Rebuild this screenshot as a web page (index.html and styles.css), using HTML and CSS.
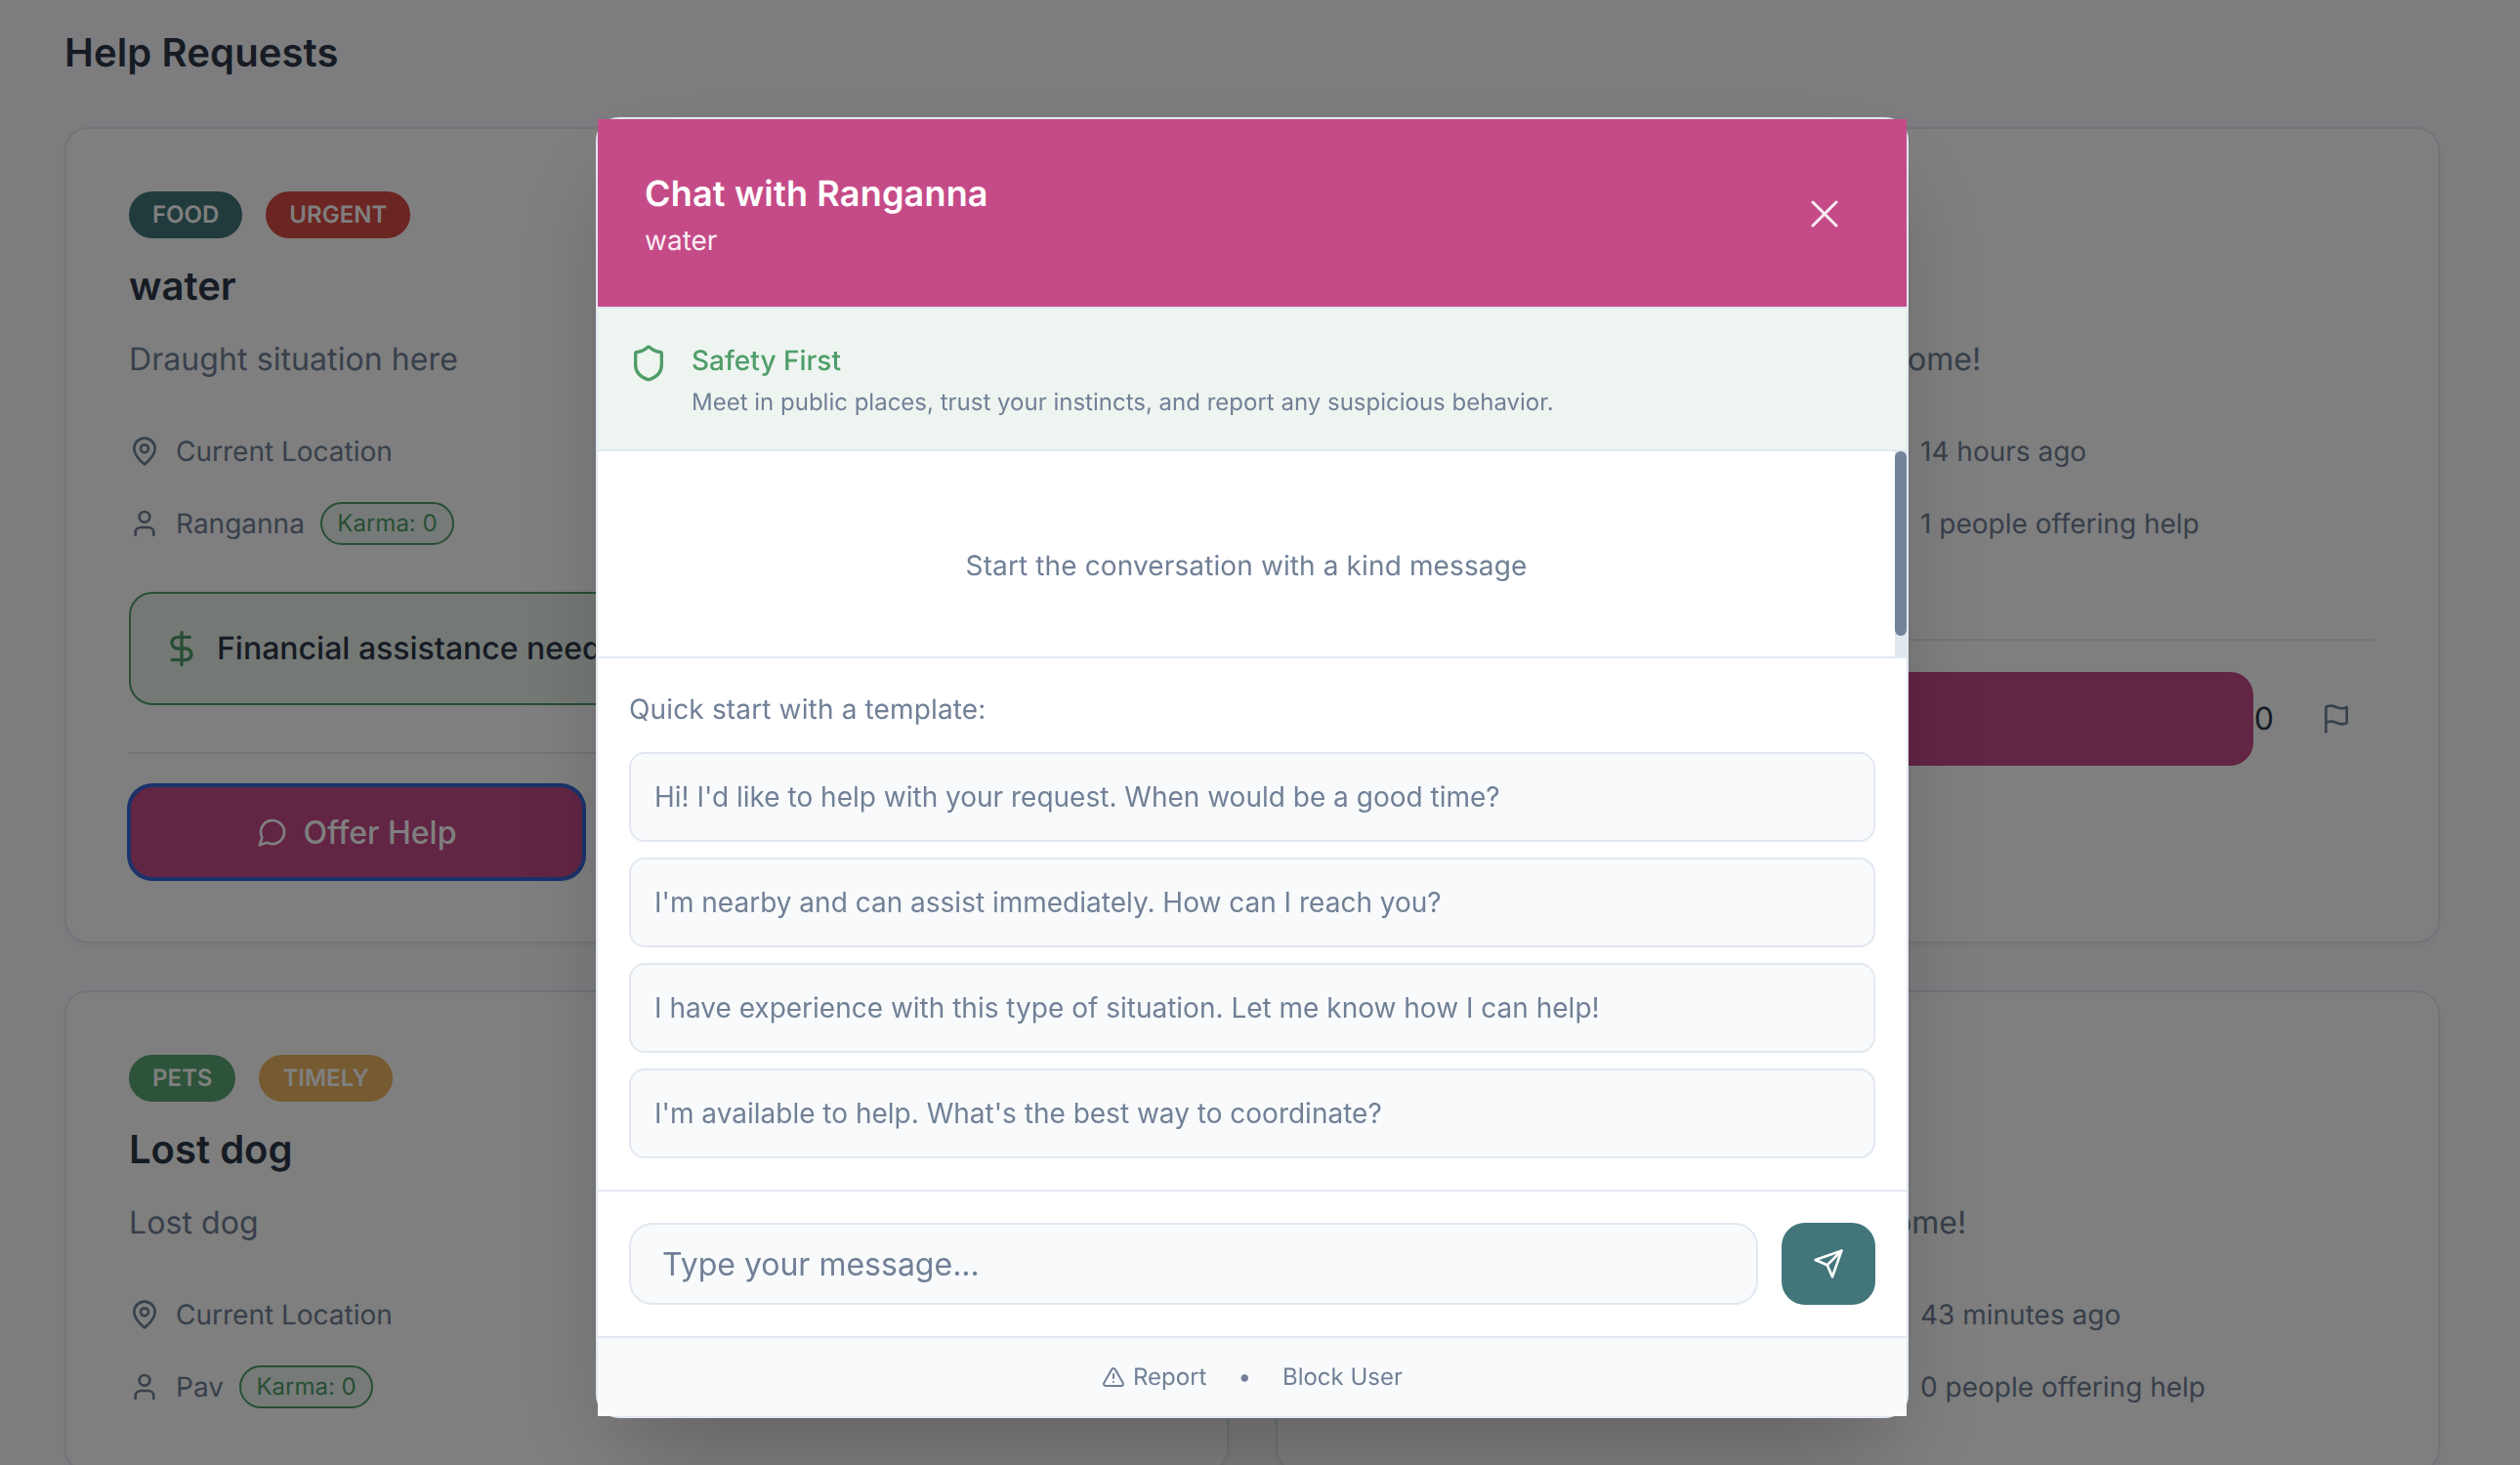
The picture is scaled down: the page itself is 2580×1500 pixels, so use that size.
FILE: index.html
```html
<!DOCTYPE html>
<html lang="en">
<head>
<meta charset="utf-8">
<title>Help Requests</title>
<link rel="stylesheet" href="styles.css">
</head>
<body>
<main class="page">
  <h1 class="page-title">Help Requests</h1>
  <div class="card-grid">
    <article class="card">
      <div class="badges"><span class="badge badge-teal">FOOD</span><span class="badge badge-red">URGENT</span></div>
      <h2 class="card-title">water</h2>
      <p class="card-desc">Draught situation here</p>
      <div class="meta">
        <div class="meta-item"><svg class="icon" viewBox="0 0 24 24"><path d="M20 10c0 6-8 12-8 12s-8-6-8-12a8 8 0 0 1 16 0Z"/><circle cx="12" cy="10" r="3"/></svg><span>Current Location</span></div>
        <div class="meta-item"><svg class="icon" viewBox="0 0 24 24"><circle cx="12" cy="12" r="10"/><path d="M12 6v6l4 2"/></svg><span>2 hours ago</span></div>
        <div class="meta-item"><svg class="icon" viewBox="0 0 24 24"><path d="M19 21v-2a4 4 0 0 0-4-4H9a4 4 0 0 0-4 4v2"/><circle cx="12" cy="7" r="4"/></svg><span>Ranganna</span><span class="karma">Karma: 0</span></div>
        <div class="meta-item"><svg class="icon" viewBox="0 0 24 24"><path d="M19 21v-2a4 4 0 0 0-4-4H9a4 4 0 0 0-4 4v2"/><circle cx="12" cy="7" r="4"/></svg><span>0 people offering help</span></div>
      </div>
      <div class="finance"><svg class="icon-lg icon-green" viewBox="0 0 24 24"><path d="M12 2v20"/><path d="M17 5H9.5a3.5 3.5 0 0 0 0 7h5a3.5 3.5 0 0 1 0 7H6"/></svg><span>Financial assistance needed</span></div>
      <div class="actions">
        <button class="btn-offer btn-focus btn-half"><svg class="icon icon-dim" viewBox="0 0 24 24"><path d="M7.9 20A9 9 0 1 0 4 16.1L2 22Z"/></svg>Offer Help</button>
      </div>
    </article>
    <article class="card">
      <div class="badges"><span class="badge badge-teal">OTHER</span><span class="badge badge-red">URGENT</span></div>
      <h2 class="card-title">Need a hand</h2>
      <p class="card-desc">Looking for support today, all are welcome!</p>
      <div class="meta">
        <div class="meta-item"><svg class="icon" viewBox="0 0 24 24"><path d="M20 10c0 6-8 12-8 12s-8-6-8-12a8 8 0 0 1 16 0Z"/><circle cx="12" cy="10" r="3"/></svg><span>Current Location</span></div>
        <div class="meta-item"><svg class="icon" viewBox="0 0 24 24"><circle cx="12" cy="12" r="10"/><path d="M12 6v6l4 2"/></svg><span>14 hours ago</span></div>
        <div class="meta-item"><svg class="icon" viewBox="0 0 24 24"><path d="M19 21v-2a4 4 0 0 0-4-4H9a4 4 0 0 0-4 4v2"/><circle cx="12" cy="7" r="4"/></svg><span>Ranganna</span><span class="karma">Karma: 0</span></div>
        <div class="meta-item"><svg class="icon" viewBox="0 0 24 24"><path d="M19 21v-2a4 4 0 0 0-4-4H9a4 4 0 0 0-4 4v2"/><circle cx="12" cy="7" r="4"/></svg><span>1 people offering help</span></div>
      </div>
      <div class="actions actions-lower">
        <button class="btn-offer btn-grow"><svg class="icon icon-dim" viewBox="0 0 24 24"><path d="M7.9 20A9 9 0 1 0 4 16.1L2 22Z"/></svg>Offer Help</button>
        <span class="count">0</span>
        <button class="btn-flag"><svg class="icon" viewBox="0 0 24 24"><path d="M4 15s1-1 4-1 5 2 8 2 4-1 4-1V3s-1 1-4 1-5-2-8-2-4 1-4 1z"/><path d="M4 22v-7"/></svg></button>
      </div>
    </article>
    <article class="card">
      <div class="badges"><span class="badge badge-green">PETS</span><span class="badge badge-amber">TIMELY</span></div>
      <h2 class="card-title">Lost dog</h2>
      <p class="card-desc">Lost dog</p>
      <div class="meta">
        <div class="meta-item"><svg class="icon" viewBox="0 0 24 24"><path d="M20 10c0 6-8 12-8 12s-8-6-8-12a8 8 0 0 1 16 0Z"/><circle cx="12" cy="10" r="3"/></svg><span>Current Location</span></div>
        <div class="meta-item"><svg class="icon" viewBox="0 0 24 24"><circle cx="12" cy="12" r="10"/><path d="M12 6v6l4 2"/></svg><span>1 hour ago</span></div>
        <div class="meta-item"><svg class="icon" viewBox="0 0 24 24"><path d="M19 21v-2a4 4 0 0 0-4-4H9a4 4 0 0 0-4 4v2"/><circle cx="12" cy="7" r="4"/></svg><span>Pav</span><span class="karma">Karma: 0</span></div>
        <div class="meta-item"><svg class="icon" viewBox="0 0 24 24"><path d="M19 21v-2a4 4 0 0 0-4-4H9a4 4 0 0 0-4 4v2"/><circle cx="12" cy="7" r="4"/></svg><span>0 people offering help</span></div>
      </div>
    </article>
    <article class="card">
      <div class="badges"><span class="badge badge-green">OTHER</span><span class="badge badge-amber">TIMELY</span></div>
      <h2 class="card-title">Need support</h2>
      <p class="card-desc">Looking for support close by, all welcome!</p>
      <div class="meta">
        <div class="meta-item"><svg class="icon" viewBox="0 0 24 24"><path d="M20 10c0 6-8 12-8 12s-8-6-8-12a8 8 0 0 1 16 0Z"/><circle cx="12" cy="10" r="3"/></svg><span>Current Location</span></div>
        <div class="meta-item"><svg class="icon" viewBox="0 0 24 24"><circle cx="12" cy="12" r="10"/><path d="M12 6v6l4 2"/></svg><span>43 minutes ago</span></div>
        <div class="meta-item"><svg class="icon" viewBox="0 0 24 24"><path d="M19 21v-2a4 4 0 0 0-4-4H9a4 4 0 0 0-4 4v2"/><circle cx="12" cy="7" r="4"/></svg><span>Pav</span><span class="karma">Karma: 0</span></div>
        <div class="meta-item"><svg class="icon" viewBox="0 0 24 24"><path d="M19 21v-2a4 4 0 0 0-4-4H9a4 4 0 0 0-4 4v2"/><circle cx="12" cy="7" r="4"/></svg><span>0 people offering help</span></div>
      </div>
    </article>
  </div>
</main>

<div class="overlay"></div>

<section class="modal">
  <header class="modal-head">
    <div>
      <h2 class="modal-title">Chat with Ranganna</h2>
      <p class="modal-sub">water</p>
    </div>
    <button class="modal-close"><svg class="icon-xl" viewBox="0 0 24 24"><path d="M18 6 6 18"/><path d="m6 6 12 12"/></svg></button>
  </header>
  <div class="safety">
    <svg class="icon-lg icon-green safety-icon" viewBox="0 0 24 24"><path d="M20 13c0 5-3.5 7.5-7.66 8.95a1 1 0 0 1-.67-.01C7.5 20.5 4 18 4 13V6a1 1 0 0 1 1-1c2 0 4.5-1.2 6.24-2.72a1.17 1.17 0 0 1 1.52 0C14.51 3.81 17 5 19 5a1 1 0 0 1 1 1z"/></svg>
    <div>
      <div class="safety-title">Safety First</div>
      <div class="safety-text">Meet in public places, trust your instincts, and report any suspicious behavior.</div>
    </div>
  </div>
  <div class="messages">
    <div class="messages-body"><p class="messages-empty">Start the conversation with a kind message</p></div>
    <div class="scroll-track"><div class="scroll-thumb"></div></div>
  </div>
  <div class="templates">
    <div class="templates-label">Quick start with a template:</div>
    <div class="template-list">
      <button class="template">Hi! I'd like to help with your request. When would be a good time?</button>
      <button class="template">I'm nearby and can assist immediately. How can I reach you?</button>
      <button class="template">I have experience with this type of situation. Let me know how I can help!</button>
      <button class="template">I'm available to help. What's the best way to coordinate?</button>
    </div>
  </div>
  <div class="composer">
    <input class="composer-input" type="text" placeholder="Type your message...">
    <button class="composer-send"><svg class="icon icon-white" viewBox="0 0 24 24"><path d="m22 2-7 20-4-9-9-4Z"/><path d="M22 2 11 13"/></svg></button>
  </div>
  <footer class="modal-foot">
    <span class="foot-link"><svg class="icon-sm" viewBox="0 0 24 24"><path d="m21.73 18-8-14a2 2 0 0 0-3.48 0l-8 14A2 2 0 0 0 4 21h16a2 2 0 0 0 1.73-3Z"/><path d="M12 9v4"/><path d="M12 17h.01"/></svg>Report</span>
    <span class="foot-dot">•</span>
    <span class="foot-link">Block User</span>
  </footer>
</section>
</body>
</html>
```
FILE: styles.css
```css
* { box-sizing: border-box; }
html, body { margin: 0; height: 1500px; overflow: hidden; }
body { background: #fafbfe; font-family: Inter, "Liberation Sans", sans-serif; color: #2d3748; text-rendering: geometricPrecision; }
h1, h2, p { margin: 0; }
button { font-family: inherit; border: 0; padding: 0; background: none; }
svg { fill: none; stroke: currentColor; stroke-width: 2; stroke-linecap: round; stroke-linejoin: round; flex: none; }

.icon { width: 32px; height: 32px; }
.icon-lg { width: 40px; height: 40px; }
.icon-xl { width: 48px; height: 48px; display: block; stroke-width: 1.5; }
.icon-sm { width: 24px; height: 24px; }
.icon-green { color: #4f9d69; }
.icon-dim, .icon-white { color: #fff; }

.page { padding: 24px 82px 0 66px; }
.page-title { font-size: 40px; line-height: 60px; font-weight: 600; letter-spacing: .12px; margin-bottom: 46px; }
.card-grid { display: grid; grid-template-columns: 1fr 1fr; gap: 48px; }

.card { background: #fff; border: 2px solid #e2e8f0; border-radius: 24px; padding: 64px; box-shadow: 0 2px 6px rgba(0,0,0,.05); min-width: 0; }
.badges { display: flex; gap: 24px; }
.badge { height: 48px; padding: 0 24px; border-radius: 24px; font-size: 24px; line-height: 48px; font-weight: 600; color: #fff; }
.badge-teal { background: #42767a; }
.badge-red { background: #d64a44; }
.badge-green { background: #5aa674; }
.badge-amber { background: #edb462; }
.card-title { font-size: 40px; line-height: 56px; font-weight: 600; margin-top: 21px; }
.card-desc { font-size: 32px; line-height: 48px; color: #718096; margin-top: 23px; white-space: nowrap; letter-spacing: .08px; }

.meta { display: grid; grid-template-columns: 1fr 1fr; gap: 32px; margin-top: 50px; }
.meta-item { display: flex; align-items: center; gap: 16px; font-size: 28px; line-height: 40px; color: #718096; min-height: 40px; }
.karma { font-size: 24px; line-height: 36px; color: #4f9d69; border: 2px solid #4f9d69; background: rgba(79,157,105,.1); border-radius: 22px; padding: 2px 15.5px; }

.finance { display: flex; align-items: center; gap: 16px; margin-top: 48px; padding: 32px; border: 2px solid #4f9d69; border-radius: 24px; background: rgba(79,157,105,.12); font-size: 32px; line-height: 48px; font-weight: 500; }

.actions { display: flex; align-items: center; margin-top: 48px; padding-top: 32px; border-top: 2px solid #e2e8f0; }
.actions-lower { margin-top: 96px; }
.btn-offer { height: 96px; display: flex; align-items: center; justify-content: center; gap: 16px; border-radius: 24px; background: #c44b88; color: #fff; font-size: 32px; font-weight: 500; }
.btn-half { width: 466px; }
.btn-grow { flex: 1; }
.btn-focus { box-shadow: 0 0 0 2px #2f66d8, inset 0 0 0 2px #2f66d8; }
.count { font-size: 32px; line-height: 48px; padding-left: 1px; }
.btn-flag { margin-left: 24px; padding: 24px; color: #718096; display: flex; }

.overlay { position: fixed; inset: 0; background: rgba(0,0,0,.5); }

.modal { position: fixed; left: 610px; top: 120px; width: 1344px; height: 1332px; background: #fff; border: 2px solid #e2e8f0; border-radius: 24px; box-shadow: 0 50px 100px -24px rgba(0,0,0,.25); display: flex; flex-direction: column; }
.modal-head { height: 192px; flex: none; padding: 49px 48px 47px; background: #c54b88; color: #fff; display: flex; justify-content: space-between; align-items: center; }
.modal-title { font-size: 36px; line-height: 54px; font-weight: 600; letter-spacing: .18px; }
.modal-sub { font-size: 28px; line-height: 42px; opacity: .9; }
.modal-close { color: #fff; padding: 12px; opacity: .9; }

.safety { flex: none; display: flex; gap: 24px; padding: 32px 32px 30px; background: #eef4f0; border-top: 2px solid #e2e8f0; border-bottom: 2px solid #e2e8f0; }
.safety-icon { margin-top: 4px; }
.safety-title { font-size: 28px; line-height: 42px; font-weight: 500; color: #4f9d69; }
.safety-text { font-size: 24px; line-height: 36px; color: #718096; margin-top: 4px; }

.messages { height: 210px; flex: none; display: flex; overflow: hidden; }
.messages-body { flex: 1; padding: 96px 32px 0; text-align: center; }
.messages-empty { font-size: 28px; line-height: 42px; color: #718096; letter-spacing: .12px; }
.scroll-track { flex: none; width: 12px; background: #e2e8f0; }
.scroll-thumb { height: 189px; background: #74829a; border-radius: 6px; }

.templates { flex: none; padding: 32px; border-top: 2px solid #e2e8f0; }
.templates-label { font-size: 28px; line-height: 40px; color: #718096; letter-spacing: .15px; margin-bottom: 24px; }
.template-list { display: flex; flex-direction: column; gap: 16px; }
.template { display: block; width: 100%; text-align: left; padding: 24px; border: 2px solid #e2e8f0; border-radius: 16px; background: #f8fafc; font-size: 28px; line-height: 40px; color: #718096; }

.composer { flex: none; display: flex; gap: 24px; padding: 32px; border-top: 2px solid #e2e8f0; }
.composer-input { flex: 1; min-width: 0; height: 84px; padding: 16px 32px; border: 2px solid #e2e8f0; border-radius: 24px; background: #f8fafc; font-family: inherit; font-size: 32px; line-height: 48px; color: #2d3748; }
.composer-input::placeholder { color: #718096; opacity: 1; }
.composer-send { width: 96px; height: 84px; border-radius: 24px; background: #42767a; display: flex; align-items: center; justify-content: center; }

.modal-foot { flex: 1; display: flex; align-items: center; justify-content: center; gap: 32px; background: #f8fafc; border-top: 2px solid #e2e8f0; font-size: 24px; line-height: 36px; color: #718096; }
.foot-link { display: flex; align-items: center; gap: 8px; }
```
